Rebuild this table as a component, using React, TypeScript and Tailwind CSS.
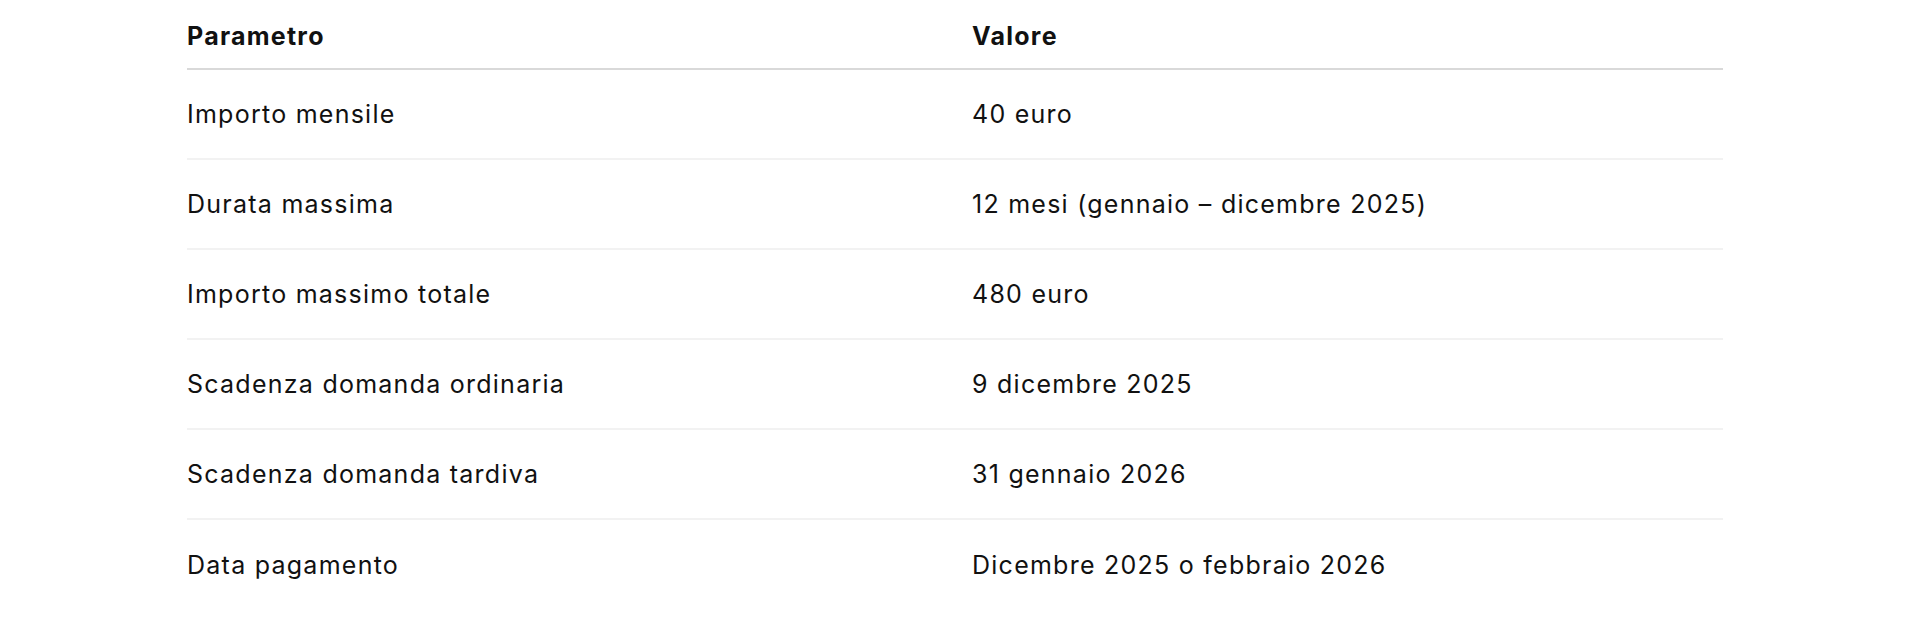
const rows = [
  { param: 'Importo mensile', value: '40 euro' },
  { param: 'Durata massima', value: '12 mesi (gennaio – dicembre 2025)' },
  { param: 'Importo massimo totale', value: '480 euro' },
  { param: 'Scadenza domanda ordinaria', value: '9 dicembre 2025' },
  { param: 'Scadenza domanda tardiva', value: '31 gennaio 2026' },
  { param: 'Data pagamento', value: 'Dicembre 2025 o febbraio 2026' },
];

export default function App() {
  return (
    <div className="min-h-[642px] w-full bg-white font-['Inter',sans-serif] text-[25px] tracking-[0.05em] text-[#111111]">
      <div className="mx-[187px] w-[1536px]">
        {/* Header */}
        <div className="grid h-[70px] grid-cols-[785px_1fr] items-center border-b-2 border-[#d9d9d9] pt-[6px] font-bold">
          <div>Parametro</div>
          <div>Valore</div>
        </div>

        {/* Rows */}
        {rows.map((row, i) => (
          <div
            key={row.param}
            className={
              i < rows.length - 1
                ? 'grid h-[90px] grid-cols-[785px_1fr] items-center border-b-2 border-[#f2f2f2] pt-[2px]'
                : 'grid h-[90px] grid-cols-[785px_1fr] items-center pt-[2px]'
            }
          >
            <div>{row.param}</div>
            <div>{row.value}</div>
          </div>
        ))}
      </div>
    </div>
  );
}
